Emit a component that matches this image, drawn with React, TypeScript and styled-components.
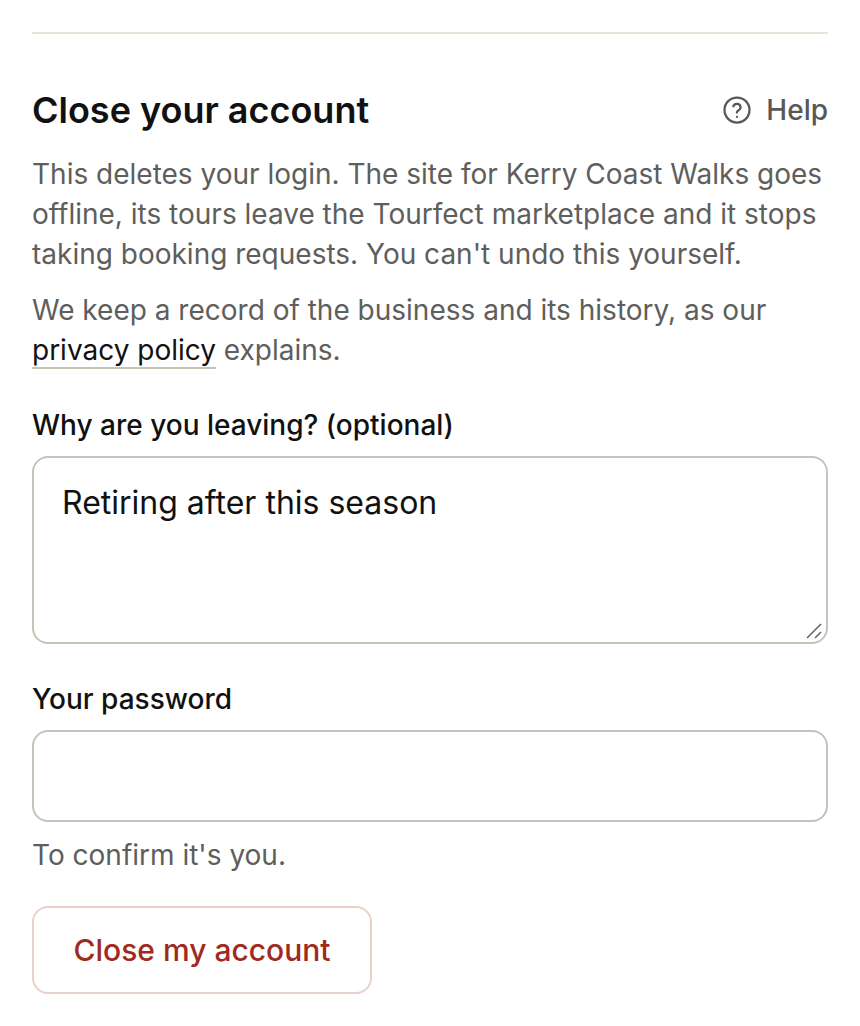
import * as React from "react";
import styled, { createGlobalStyle } from "styled-components";

const GlobalStyle = createGlobalStyle`
  html, body {
    margin: 0;
    padding: 0;
    background: #ffffff;
  }
  body {
    font-family: Inter, "Liberation Sans", sans-serif;
    color: #111111;
  }
`;

const Page = styled.div`
  padding: 32px 32px 32px;
  width: 860px;
  box-sizing: border-box;
`;

const Divider = styled.hr`
  margin: 0 0 50px;
  border: 0;
  border-top: 2px solid #e6e5d8;
`;

const Header = styled.div`
  display: flex;
  align-items: center;
  justify-content: space-between;
  margin-bottom: 18px;
`;

const Title = styled.h2`
  margin: 0;
  font-size: 36px;
  line-height: 52px;
  font-weight: 600;
  color: #111111;
`;

const HelpLink = styled.a`
  display: flex;
  align-items: center;
  gap: 14px;
  font-size: 28px;
  font-weight: 500;
  color: #585858;
`;

const Para = styled.p`
  margin: 0 0 16px;
  font-size: 28px;
  line-height: 40px;
  color: #5e5e5c;
`;

const PolicyLink = styled.a`
  color: #111111;
  text-decoration: none;
  border-bottom: 2px solid #c5c4b2;
`;

const Label = styled.label`
  display: block;
  font-size: 28px;
  line-height: 40px;
  font-weight: 500;
  color: #111111;
  margin-bottom: 11px;
`;

const Field = styled.div`
  margin-bottom: 35px;
`;

const FirstField = styled(Field)`
  margin-top: 35px;
`;

const TextAreaWrap = styled.div`
  position: relative;
`;

const TextArea = styled.textarea`
  display: block;
  width: 100%;
  height: 188px;
  box-sizing: border-box;
  padding: 23px 28px;
  font-family: inherit;
  font-size: 32px;
  line-height: 44px;
  color: #111111;
  border: 2px solid #c5c4b8;
  border-radius: 16px;
  background: #ffffff;
  outline: none;
  resize: none;
`;

const Grip = styled.svg`
  position: absolute;
  right: 4px;
  bottom: 4px;
  pointer-events: none;
`;

const Input = styled.input`
  display: block;
  width: 100%;
  height: 92px;
  box-sizing: border-box;
  border: 2px solid #c5c4b8;
  border-radius: 16px;
  background: #ffffff;
  outline: none;
`;

const Hint = styled.p`
  margin: 13px 0 31px;
  font-size: 28px;
  line-height: 40px;
  color: #5e5e5c;
`;

const DangerButton = styled.button`
  display: block;
  width: 340px;
  height: 88px;
  box-sizing: border-box;
  font-family: inherit;
  font-size: 30px;
  font-weight: 500;
  color: #9f2a1e;
  background: #ffffff;
  border: 2px solid #eccfca;
  border-radius: 16px;
`;

const HelpIcon = () => (
  <svg width="30" height="30" viewBox="0 0 24 24" fill="none" stroke="currentColor" strokeWidth="1.8" strokeLinecap="round" strokeLinejoin="round">
    <circle cx="12" cy="12" r="10" />
    <path d="M9.1 9a3 3 0 0 1 5.8 1c0 2-3 2.6-3 4" />
    <path d="M12 17.5h.01" />
  </svg>
);

export default function App() {
  return (
    <Page>
      <GlobalStyle />
      <Divider />
      <Header>
        <Title>Close your account</Title>
        <HelpLink>
          <HelpIcon />
          Help
        </HelpLink>
      </Header>
      <Para>
        This deletes your login. The site for Kerry Coast Walks goes offline, its tours leave the Tourfect marketplace and it stops taking booking requests. You can't undo this yourself.
      </Para>
      <Para>
        We keep a record of the business and its history, as our <PolicyLink>privacy policy</PolicyLink> explains.
      </Para>
      <FirstField>
        <Label>Why are you leaving? (optional)</Label>
        <TextAreaWrap>
          <TextArea defaultValue="Retiring after this season" />
          <Grip width="18" height="18" viewBox="0 0 18 18" fill="none" stroke="#666666" strokeWidth="1.6">
            <path d="M1 16 L15 2" />
            <path d="M9 16 L15 10" />
          </Grip>
        </TextAreaWrap>
      </FirstField>
      <Label>Your password</Label>
      <Input type="password" />
      <Hint>To confirm it's you.</Hint>
      <DangerButton>Close my account</DangerButton>
    </Page>
  );
}
